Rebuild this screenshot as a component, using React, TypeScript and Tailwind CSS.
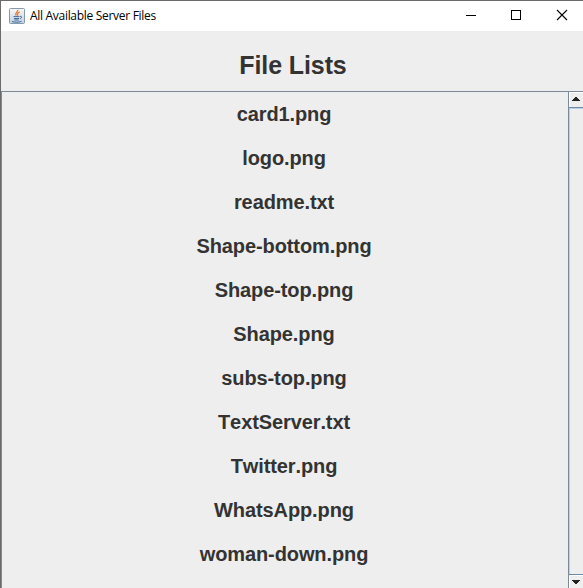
const files = [
  'card1.png',
  'logo.png',
  'readme.txt',
  'Shape-bottom.png',
  'Shape-top.png',
  'Shape.png',
  'subs-top.png',
  'TextServer.txt',
  'Twitter.png',
  'WhatsApp.png',
  'woman-down.png',
];

function JavaIcon() {
  return (
    <svg width="16" height="16" viewBox="0 0 16 16" fill="none">
      <defs>
        <linearGradient id="tile" x1="0" y1="0" x2="0" y2="1">
          <stop offset="0" stopColor="#f7f8f9" />
          <stop offset="1" stopColor="#c3d0dc" />
        </linearGradient>
      </defs>
      <rect x="0.5" y="0.5" width="15" height="15" rx="1" fill="url(#tile)" stroke="#8499ac" />
      <path d="M8.8 1.8C9.6 3.8 5.2 4.4 7.2 7.6M10.6 4.2C8.4 5.2 8.0 5.9 8.9 7.8" stroke="#e8792b" strokeWidth="1.3" />
      <path d="M4.5 8.6h6M5 10.5h5M5.3 12h4.4M3 13.5c2.5.9 7 .9 9.5-.1M11 8.4c2-.5 2.2 1.6-.2 2.4" stroke="#3f6a99" strokeWidth="1" />
    </svg>
  );
}

function TitleBar() {
  return (
    <header className="flex h-[30px] shrink-0 items-center bg-white pl-2">
      <JavaIcon />
      <span className="ml-[5px] whitespace-nowrap font-['Open_Sans','Noto_Sans',sans-serif] text-[12px] font-normal leading-[16px] tracking-[-0.3px] text-black">
        All Available Server Files
      </span>
      <svg className="ml-auto shrink-0" width="135" height="30" viewBox="0 0 135 30" fill="none" stroke="#000">
        <path d="M18 14.5h10" shapeRendering="crispEdges" />
        <rect x="63.5" y="9.5" width="9" height="9" shapeRendering="crispEdges" />
        <path d="M109 9l10 10M119 9l-10 10" strokeWidth="1.1" />
      </svg>
    </header>
  );
}

function ScrollBar() {
  return (
    <div className="flex w-[15px] shrink-0 flex-col border-l border-[#7a8a99]">
      <div className="flex h-[15px] shrink-0 justify-center border-l border-t border-white pt-[4px]">
        <svg width="8" height="4" viewBox="0 0 8 4" shapeRendering="crispEdges" className="mr-[2px]">
          <path d="M3 0h2v1h1v1h1v1h1v1H0V3h1V2h1V1h1z" fill="#222" />
        </svg>
      </div>
      <div className="flex-1 border-y border-[#6f8aa8]">
        <div className="h-full border-l border-t border-[#b8cfe5]" />
      </div>
      <div className="flex h-[13px] shrink-0 justify-center border-l border-t border-white pt-[4px]">
        <svg width="8" height="4" viewBox="0 0 8 4" shapeRendering="crispEdges" className="mr-[2px]">
          <path d="M0 0h8v1H7v1H6v1H5v1H3V3H2V2H1V1H0z" fill="#222" />
        </svg>
      </div>
    </div>
  );
}

export default function App() {
  return (
    <div className="flex h-[588px] w-[583px] flex-col overflow-hidden border-l border-t border-[#6b6b6b] bg-[#eeeeee] font-['Liberation_Sans',Arial,sans-serif] font-bold text-[#333333]">
      <TitleBar />
      <h1 className="flex h-[60px] shrink-0 items-center justify-center pl-[2px] pt-[8px] text-[25px] leading-[30px] tracking-[-0.1px]">
        File Lists
      </h1>
      <main className="flex min-h-0 flex-1 border-l border-t border-[#7a8a99]">
        <ul className="flex-1 overflow-hidden pr-[2px] text-center text-[20px] leading-[44px] tracking-[-0.1px] [font-kerning:none]">
          {files.map((name) => (
            <li key={name} className="h-[44px]">
              {name}
            </li>
          ))}
        </ul>
        <ScrollBar />
      </main>
    </div>
  );
}
